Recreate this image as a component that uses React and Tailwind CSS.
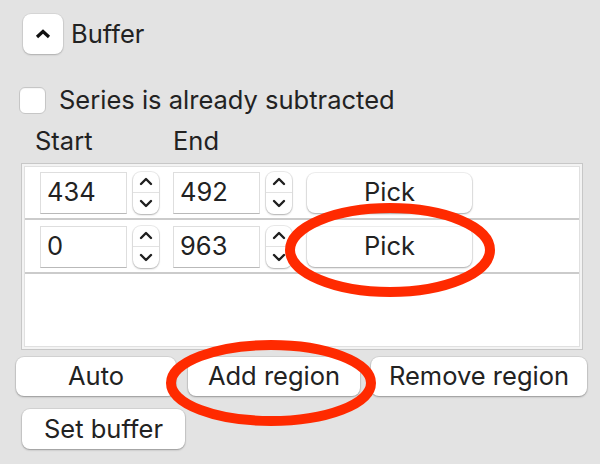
import React from 'react';

const font = { fontFamily: 'Inter, "Noto Sans", sans-serif' };

function Stepper() {
  return (
    <div className="ml-[6px] w-[26px] h-[42px] rounded-[8px] bg-white shadow-[0_0_0_1px_rgba(0,0,0,0.08),0_1px_2px_rgba(0,0,0,0.25)] flex flex-col">
      <div className="flex-1 flex items-center justify-center border-b border-[#e2e2e2]">
        <svg width="14" height="9" viewBox="0 0 14 9">
          <path d="M2 7 L7 2 L12 7" fill="none" stroke="#1f1f1f" strokeWidth="2.4" strokeLinecap="round" strokeLinejoin="round" />
        </svg>
      </div>
      <div className="flex-1 flex items-center justify-center">
        <svg width="14" height="9" viewBox="0 0 14 9">
          <path d="M2 2 L7 7 L12 2" fill="none" stroke="#1f1f1f" strokeWidth="2.4" strokeLinecap="round" strokeLinejoin="round" />
        </svg>
      </div>
    </div>
  );
}

function Field({ value }) {
  return (
    <div className="w-[87px] h-[42px] bg-white border border-[#dedede] border-b-[#b9b9b9] flex items-center pl-[6px] text-[25.5px] text-[#222]">
      {value}
    </div>
  );
}

function Btn({ children, className }) {
  return (
    <button className={`bg-white rounded-[8px] shadow-[0_0_0_1px_rgba(0,0,0,0.06),0_1px_2px_rgba(0,0,0,0.3)] text-[25.5px] text-[#222] flex items-center justify-center ${className}`}>
      {children}
    </button>
  );
}

function RegionRow({ start, end }) {
  return (
    <div className="h-[53px] flex items-center pl-[15px] border-b-2 border-[#cbcbcb] mb-[1px]">
      <Field value={start} />
      <Stepper />
      <div className="ml-[14px]"><Field value={end} /></div>
      <Stepper />
      <Btn className="ml-[15px] w-[165px] h-[40px]">Pick</Btn>
    </div>
  );
}

export default function App() {
  const regions = [
    { start: '434', end: '492' },
    { start: '0', end: '963' },
  ];

  return (
    <div className="w-[600px] h-[464px] bg-[#e3e3e3] relative overflow-hidden pt-[14px] text-[#222]" style={font}>
      {/* Kopfzeile */}
      <div className="flex items-center pl-[23px] h-[40px]">
        <button className="w-[40px] h-[40px] rounded-[8px] bg-white shadow-[0_0_0_1px_rgba(0,0,0,0.05),0_1px_2px_rgba(0,0,0,0.2)] flex items-center justify-center">
          <svg width="16" height="10" viewBox="0 0 16 10">
            <path d="M2 8 L8 2.5 L14 8" fill="none" stroke="#111" strokeWidth="3.2" strokeLinejoin="miter" />
          </svg>
        </button>
        <span className="ml-[8px] text-[25.5px]">Buffer</span>
      </div>

      <div className="flex items-center pl-[19px] h-[27px] mt-[33px]">
        <div className="w-[27px] h-[27px] rounded-[6px] bg-white border border-[#c6c6c6] shadow-[inset_0_1px_1px_rgba(0,0,0,0.04)]" />
        <span className="ml-[13px] text-[25.5px]">Series is already subtracted</span>
      </div>

      <div className="flex items-center h-[30px] mt-[12px] text-[25.5px]">
        <span className="ml-[35px] w-[138px]">Start</span>
        <span>End</span>
      </div>

      {/* Liste der Bereiche */}
      <div className="ml-[21px] mt-[7px] w-[562px] h-[187px] border border-[#c7c7c7] bg-[#f3f3f3] p-[2px]">
        <div className="h-full bg-white border border-[#e0e0e0]">
          {regions.map((r, i) => (
            <RegionRow key={i} start={r.start} end={r.end} />
          ))}
        </div>
      </div>

      <div className="flex pl-[16px] mt-[7px]">
        <Btn className="w-[160px] h-[39px]">Auto</Btn>
        <Btn className="ml-[12px] w-[172px] h-[39px]">Add region</Btn>
        <Btn className="ml-[11px] w-[216px] h-[39px]">Remove region</Btn>
      </div>

      <div className="pl-[22px] mt-[13px]">
        <Btn className="w-[163px] h-[40px]">Set buffer</Btn>
      </div>

      {/* rote Markierungen */}
      <svg className="absolute left-0 top-0 pointer-events-none" width="600" height="464">
        <ellipse cx="390" cy="250" rx="100" ry="42" fill="none" stroke="#ff2a00" strokeWidth="10" />
        <ellipse cx="271" cy="383" rx="100" ry="38" fill="none" stroke="#ff2a00" strokeWidth="10" />
      </svg>
    </div>
  );
}
